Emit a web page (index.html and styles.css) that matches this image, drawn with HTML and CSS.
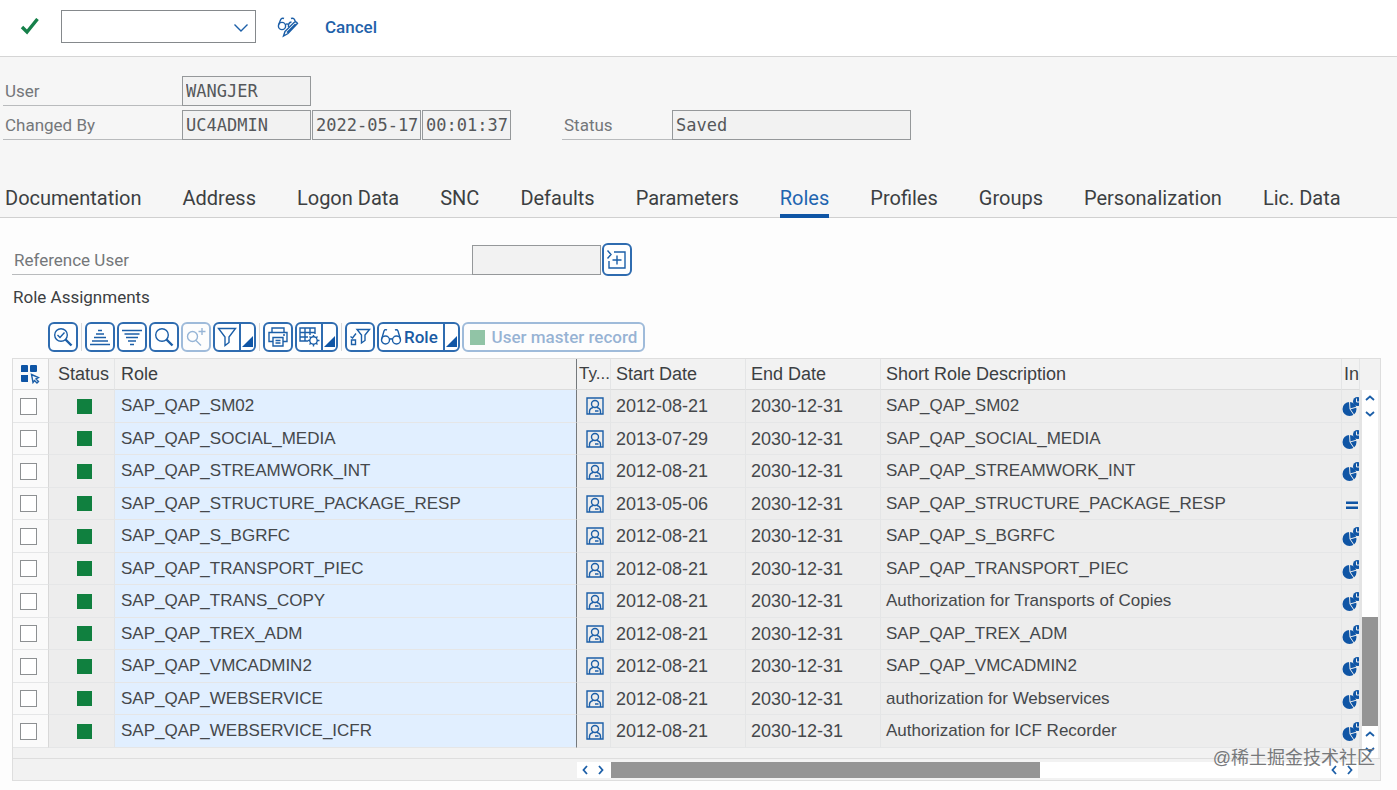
FILE: index.html
```
<!DOCTYPE html>
<html lang="en">
<head>
    <meta charset="UTF-8">
    <meta name="viewport" content="width=device-width, initial-scale=1.0">
    <title>Display User</title>
    <link rel="stylesheet" href="styles.css">
</head>
<body>
    <!-- Icon sprites -->
    <svg class="sprites" aria-hidden="true">
        <symbol id="i-user" viewBox="0 0 18 18">
            <path d="M1 1h16v16H1z M3.500 17v-2.500q0-3 3.500-4 M14.500 17v-2.500q0-3-3.500-4 M9 14h3.500" />
            <circle cx="9" cy="7" r="3.500" />
        </symbol>
        <symbol id="i-pie" viewBox="0 0 17 20">
            <circle class="fill" cx="7.500" cy="13" r="7" />
            <path class="cut" d="M7.500 5.500l.5 7.500 4 6 M8 13l7-2" />
            <circle class="fill" cx="15.500" cy="5.500" r="4.500" />
            <path class="cut" d="M14.500 2.500v3.500h2.500" />
        </symbol>
        <symbol id="i-equal" viewBox="0 0 17 20">
            <path class="fill" d="M4 7.500h12V10H4z M4 12.500h12V15H4z" />
        </symbol>
        <symbol id="i-glass" viewBox="0 0 22 22">
            <circle cx="9" cy="9" r="6.300" />
            <path class="thick" d="M13.500 13.500l6 6" />
        </symbol>
    </svg>

    <header class="topbar">
        <button class="plain check" aria-label="Enter">
            <svg width="20" height="18" viewBox="0 0 20 18"><path d="M2 9l5 5L17.500 1" /></svg>
        </button>
        <div class="command">
            <select aria-label="Command"><option></option></select>
            <svg width="16" height="10" viewBox="0 0 16 10"><path d="M1.500 1.500L8 8l6.500-6.500" /></svg>
        </div>
        <button class="plain toggle" aria-label="Display / Change">
            <svg width="22" height="22" viewBox="0 0 22 22">
                <circle cx="5" cy="10" r="3.600" />
                <path d="M1.500 9L3.500 4q1-2.500 3.500-1.500 M8.300 9q1.500-2 3-.5 M11.500 11q-.5-4.500 3-5 M14 2.500q2.500-1 3.500 1l1 2.500" />
                <path d="M8 15.500L17 6.500q2-1.500 3.500.8L11 17.500 6.500 20z M10 16.500l8.500-8.500" />
            </svg>
        </button>
        <button class="plain cancel">Cancel</button>
    </header>

    <section class="user-info">
        <div class="line">
            <label for="user" class="label">User</label>
            <input id="user" class="w-user" value="WANGJER" readonly>
        </div>
        <div class="line">
            <label for="changedBy" class="label">Changed By</label>
            <input id="changedBy" class="w-user" value="UC4ADMIN" readonly>
            <input class="w-date" value="2022-05-17" aria-label="Changed on" readonly>
            <input class="w-time" value="00:01:37" aria-label="Changed at" readonly>
            <label for="status" class="label status-label">Status</label>
            <input id="status" class="w-status" value="Saved" readonly>
        </div>
    </section>

    <nav class="tabs">
        <a href="#">Documentation</a>
        <a href="#">Address</a>
        <a href="#">Logon Data</a>
        <a href="#">SNC</a>
        <a href="#">Defaults</a>
        <a href="#">Parameters</a>
        <a href="#" class="active">Roles</a>
        <a href="#">Profiles</a>
        <a href="#">Groups</a>
        <a href="#">Personalization</a>
        <a href="#">Lic. Data</a>
    </nav>

    <main class="panel">
        <div class="line reference">
            <label for="refUser" class="label">Reference User</label>
            <input id="refUser" class="w-user" readonly>
            <button class="btn insert" aria-label="Insert reference user">
                <svg width="22" height="22" viewBox="0 0 22 22"><path d="M1.500 1.500L5 5.500 1.500 9.500 M8 3h11v16H3v-7 M11 6.500v9 M6.500 11h9" /></svg>
            </button>
        </div>

        <h2>Role Assignments</h2>

        <div class="toolbar">
            <button class="btn" aria-label="Details">
                <svg width="22" height="22" viewBox="0 0 22 22"><use href="#i-glass" /><path d="M5.500 9l2.500 2.500L12.500 6.500" /></svg>
            </button>
            <span class="sep"></span>
            <button class="btn" aria-label="Sort ascending">
                <svg width="22" height="22" viewBox="0 0 22 22"><path d="M9 4.500h4 M7 8h8 M5 11.500h12 M3 15h16 M1 18.500h20" /></svg>
            </button>
            <button class="btn" aria-label="Sort descending">
                <svg width="22" height="22" viewBox="0 0 22 22"><path d="M1 4.500h20 M3.500 8h15 M5 11.500h12 M7 15h8 M9 18.500h4" /></svg>
            </button>
            <button class="btn" aria-label="Find">
                <svg width="22" height="22" viewBox="0 0 22 22"><use href="#i-glass" /></svg>
            </button>
            <button class="btn" aria-label="Find next" disabled>
                <svg width="22" height="22" viewBox="0 0 22 22"><circle cx="7.500" cy="10.500" r="5" /><path d="M11 14.500l5 5 M17 2v7 M13.500 5.500h7" /></svg>
            </button>
            <button class="btn split" aria-label="Filter">
                <svg width="22" height="22" viewBox="0 0 22 22"><path d="M2.500 2.500h17L13 11v5.500L9 19.500V11z" /></svg>
                <span class="corner"></span>
            </button>
            <span class="sep"></span>
            <button class="btn" aria-label="Print">
                <svg width="22" height="22" viewBox="0 0 22 22"><path d="M5 6V2h12v4 M5.500 15.500H2V6.500h18v9h-3.500 M6 11.500h10V20H6z M8.500 14.500h5 M8.500 17h5 M16 9h2" /></svg>
            </button>
            <button class="btn split" aria-label="Layout">
                <svg width="22" height="22" viewBox="0 0 22 22"><path d="M10 15H2V2h15v6 M2 6.500h15 M2 11h8 M7 2v13 M12 2v7" /><circle cx="15.500" cy="14.500" r="3.700" /><path d="M15.500 9v2 M15.500 18v2.500 M10 14.500h2 M19 14.500h2.500 M11.500 10.500l1.500 1.500 M18 17l1.500 1.500 M19.500 10.500L18 12 M13 17l-1.500 1.500" /></svg>
                <span class="corner"></span>
            </button>
            <span class="sep"></span>
            <button class="btn" aria-label="Filter selection">
                <svg width="22" height="22" viewBox="0 0 22 22"><path d="M8 3.500h12.500L16 9v5.500L12.500 17V9z M2.500 14h4v4.500h-4z M1.500 10.500l2 1.500L7 7.500" /></svg>
            </button>
            <button class="btn split role">
                <svg width="22" height="22" viewBox="0 0 22 22"><circle cx="5.500" cy="14" r="4" /><circle cx="16.500" cy="14" r="4" /><path d="M9.500 13.500q1.500-1.500 3 0 M1.500 13.500L4 5q1-2 3-1 M20.500 13.500L18 5q-1-2-3-1" /></svg>
                <span class="text">Role</span>
                <span class="corner"></span>
            </button>
            <button class="btn master" disabled><span class="square"></span>User master record</button>
        </div>

        <div class="grid">
            <div class="grid-body">
                <table>
                    <colgroup>
                        <col class="c-sel"><col class="c-status"><col class="c-role"><col class="c-type">
                        <col class="c-date"><col class="c-date"><col><col class="c-in">
                    </colgroup>
                    <thead>
                        <tr>
                            <th class="sel">
                                <svg width="20" height="20" viewBox="0 0 20 20">
                                    <path class="fill" d="M2 1h5q1 0 1 1v6H1V2q0-1 1-1z M11 1h5q1 0 1 1v5q0 1-1 1h-5q-1 0-1-1V2q0-1 1-1z M1 11h7v7H2q-1 0-1-1z" />
                                    <path d="M11.500 10.500l7 3-2.500 1.500 2.500 2.500-1.500 1.500-2.500-2.500-1.500 2z" />
                                </svg>
                            </th>
                            <th class="status">Status</th>
                            <th class="divider">Role</th>
                            <th class="type">Ty...</th>
                            <th>Start Date</th>
                            <th>End Date</th>
                            <th>Short Role Description</th>
                            <th class="in">In</th>
                        </tr>
                    </thead>
                    <tbody id="roles"></tbody>
                </table>
                <div class="vscroll">
                    <div class="arrows">
                        <svg width="10" height="6" viewBox="0 0 10 6"><path d="M1 5l4-3.500L9 5" /></svg>
                        <svg width="10" height="6" viewBox="0 0 10 6"><path d="M1 1l4 3.500L9 1" /></svg>
                    </div>
                    <div class="track"><div class="thumb"></div></div>
                    <div class="arrows">
                        <svg width="10" height="6" viewBox="0 0 10 6"><path d="M1 5l4-3.500L9 5" /></svg>
                        <svg width="10" height="6" viewBox="0 0 10 6"><path d="M1 1l4 3.500L9 1" /></svg>
                    </div>
                </div>
            </div>
            <div class="hscroll">
                <div class="arrows">
                    <svg width="6" height="10" viewBox="0 0 6 10"><path d="M5 1L1.500 5 5 9" /></svg>
                    <svg width="6" height="10" viewBox="0 0 6 10"><path d="M1 1l3.500 4L1 9" /></svg>
                </div>
                <div class="track"><div class="thumb"></div></div>
                <div class="arrows">
                    <svg width="6" height="10" viewBox="0 0 6 10"><path d="M5 1L1.500 5 5 9" /></svg>
                    <svg width="6" height="10" viewBox="0 0 6 10"><path d="M1 1l3.500 4L1 9" /></svg>
                </div>
            </div>
            <div class="watermark">@稀土掘金技术社区</div>
        </div>
    </main>

    <script>
        // role, start date, description, indicator icon
        const roles = [
            ['SAP_QAP_SM02', '2012-08-21', 'SAP_QAP_SM02', 'pie'],
            ['SAP_QAP_SOCIAL_MEDIA', '2013-07-29', 'SAP_QAP_SOCIAL_MEDIA', 'pie'],
            ['SAP_QAP_STREAMWORK_INT', '2012-08-21', 'SAP_QAP_STREAMWORK_INT', 'pie'],
            ['SAP_QAP_STRUCTURE_PACKAGE_RESP', '2013-05-06', 'SAP_QAP_STRUCTURE_PACKAGE_RESP', 'equal'],
            ['SAP_QAP_S_BGRFC', '2012-08-21', 'SAP_QAP_S_BGRFC', 'pie'],
            ['SAP_QAP_TRANSPORT_PIEC', '2012-08-21', 'SAP_QAP_TRANSPORT_PIEC', 'pie'],
            ['SAP_QAP_TRANS_COPY', '2012-08-21', 'Authorization for Transports of Copies', 'pie'],
            ['SAP_QAP_TREX_ADM', '2012-08-21', 'SAP_QAP_TREX_ADM', 'pie'],
            ['SAP_QAP_VMCADMIN2', '2012-08-21', 'SAP_QAP_VMCADMIN2', 'pie'],
            ['SAP_QAP_WEBSERVICE', '2012-08-21', 'authorization for Webservices', 'pie'],
            ['SAP_QAP_WEBSERVICE_ICFR', '2012-08-21', 'Authorization for ICF Recorder', 'pie']
        ];

        document.getElementById('roles').innerHTML = roles.map(([role, start, text, icon]) => `
            <tr>
                <td class="sel"><input type="checkbox" aria-label="Select ${role}"></td>
                <td class="status"><span class="square"></span></td>
                <td class="name divider">${role}</td>
                <td class="type"><svg width="18" height="18"><use href="#i-user" /></svg></td>
                <td>${start}</td>
                <td>2030-12-31</td>
                <td class="description">${text}</td>
                <td class="in"><svg width="17" height="20"><use href="#i-${icon}" /></svg></td>
            </tr>`).join('');
    </script>
</body>
</html>
```
FILE: styles.css
```
* {
    box-sizing: border-box;
}

body {
    margin: 0;
    background-color: #fdfdfd;
    color: #3c3f42;
    font-family: Roboto, "Liberation Sans", sans-serif;
    font-size: 17px;
}

svg {
    display: block;
    flex: none;
    fill: none;
    stroke: #1c5fa8;
    stroke-width: 1.4;
}

svg .fill {
    fill: #0f55a5;
    stroke: none;
}

svg .cut {
    stroke: #ededed;
    stroke-width: 1;
}

svg .thick {
    stroke-width: 2.4;
}

.sprites {
    position: absolute;
    width: 0;
    height: 0;
}

button,
input,
select {
    margin: 0;
    font-family: inherit;
    font-size: inherit;
}

/* Top bar */
.topbar {
    display: flex;
    align-items: center;
    height: 57px;
    padding: 0 0 3px 20px;
    background-color: #fff;
    border-bottom: 1px solid #d5d5d5;
}

.plain {
    padding: 0;
    border: none;
    background: none;
    cursor: pointer;
}

.check svg {
    stroke: #16804a;
    stroke-width: 3.4;
}

.command {
    position: relative;
    margin: 0 21px;
}

.command select {
    display: block;
    width: 195px;
    height: 33px;
    border: 1px solid #85898c;
    border-radius: 0;
    background-color: #fff;
    appearance: none;
}

.command svg {
    position: absolute;
    right: 7px;
    top: 13px;
    pointer-events: none;
}

.cancel {
    margin-left: 26px;
    color: #1f62aa;
    font-weight: 500;
}

/* Form lines */
.user-info {
    display: flex;
    flex-direction: column;
    gap: 4px;
    height: 121px;
    padding: 19px 0 0 3px;
    background-color: #f6f6f6;
}

.line {
    display: flex;
    align-items: flex-end;
    gap: 1px;
}

.label {
    width: 179px;
    height: 30px;
    margin-right: -1px;
    padding-left: 2px;
    border-bottom: 1px solid #b9bbbd;
    color: #74777a;
    line-height: 30px;
}

.line input {
    height: 30px;
    padding: 0 0 0 3px;
    border: 1px solid #95989a;
    border-radius: 0;
    background-color: #f2f2f2;
    color: #55585b;
    font-family: "DejaVu Sans Mono", monospace;
    outline: none;
}

.w-user {
    width: 129px;
}

.w-date {
    width: 109px;
}

.w-time {
    width: 89px;
}

.w-status {
    width: 239px;
}

.status-label {
    width: 110px;
    margin-left: 50px;
}

/* Tabs */
.tabs {
    display: flex;
    gap: 41px;
    height: 40px;
    padding-left: 5px;
    background-color: #f6f6f6;
    border-bottom: 1px solid #d0d0d0;
    font-size: 20px;
    line-height: 40px;
}

.tabs a {
    height: 40px;
    color: #3c3f42;
    text-decoration: none;
    white-space: nowrap;
}

.tabs .active {
    color: #1f65b0;
    border-bottom: 4px solid #0f55a5;
}

/* Roles panel */
.panel {
    padding: 25px 16px 0 12px;
}

.reference .label {
    width: 460px;
}

.reference {
    align-items: center;
}

h2 {
    margin: 8px 0 12px 1px;
    font-size: 17px;
    font-weight: 400;
    line-height: 26px;
}

.btn {
    display: flex;
    align-items: center;
    justify-content: center;
    width: 30px;
    height: 30px;
    padding: 0;
    border: 2px solid #2f6cb0;
    border-radius: 6px;
    background-color: #fff;
    color: #1a5ba4;
    font-weight: 500;
    cursor: pointer;
    overflow: hidden;
}

.btn:disabled {
    opacity: 0.45;
}

.insert {
    height: 33px;
}

.toolbar {
    display: flex;
    align-items: center;
    gap: 2px;
    height: 30px;
    margin: 0 0 6px 36px;
}

.toolbar .sep {
    width: 1px;
    height: 28px;
    margin: 0 1px;
    background-color: #dadada;
}

.toolbar .split {
    justify-content: flex-start;
    width: 43px;
    padding-left: 1px;
}

.corner {
    display: flex;
    flex: none;
    align-items: flex-end;
    justify-content: flex-end;
    width: 15px;
    height: 26px;
    margin-left: auto;
    padding: 0 1px 3px 0;
    border-left: 2px solid #2f6cb0;
}

.corner::after {
    content: "";
    width: 11px;
    height: 11px;
    background-color: #0f55a5;
    clip-path: polygon(100% 0, 100% 100%, 0 100%);
}

.toolbar .role {
    width: 83px;
}

.role .text {
    margin-left: 2px;
}

.toolbar .master {
    width: 183px;
    gap: 7px;
}

.square {
    display: block;
    width: 15px;
    height: 15px;
    background-color: #10803f;
}

/* Table of roles */
.grid {
    position: relative;
    border: 1px solid #dedede;
    background-color: #f2f2f2;
    font-family: "Liberation Sans", Arial, sans-serif;
    font-size: 18px;
}

.grid-body {
    display: flex;
    border-bottom: 1px solid #dedede;
}

table {
    flex: 1;
    width: 100%;
    margin-bottom: 10px;
    table-layout: fixed;
    border-collapse: separate;
    border-spacing: 0;
}

.c-sel {
    width: 36px;
}

.c-status {
    width: 66px;
}

.c-role {
    width: 462px;
}

.c-type {
    width: 34px;
}

.c-date {
    width: 135px;
}

.c-in {
    width: 18px;
}

th,
td {
    height: 33px;
    padding: 0 0 0 5px;
    border-right: 1px solid #e4e5e6;
    border-bottom: 1px solid #e5e6e7;
    background-color: #ededed;
    font-weight: 400;
    line-height: 24px;
    text-align: left;
    white-space: nowrap;
}

td {
    color: #45484b;
}

tbody tr:nth-child(even) td {
    height: 32px;
}

th {
    height: 31px;
    border-bottom-color: #dcdcdc;
    background-color: #f2f2f2;
}

th.sel,
td.sel {
    padding-left: 7px;
    border-right-color: #d8d8d8;
    background-color: #fafafa;
}

.sel input {
    display: block;
    width: 17px;
    height: 17px;
    margin: 0;
    border: 1px solid #8d9092;
    background-color: #fff;
    appearance: none;
}

th.status {
    padding-left: 9px;
}

td.status {
    padding-left: 28px;
}

td.name {
    background-color: #e1efff;
}

td.name,
td.description {
    font-size: 17px;
}

th.divider,
td.divider {
    padding-left: 6px;
    border-right-color: #75797c;
}

th.type {
    padding-left: 2px;
    font-size: 17px;
}

td.type {
    padding-left: 9px;
}

th.in {
    padding-left: 2px;
}

td.in {
    padding-left: 0;
}

/* Scroll bars */
.vscroll {
    display: flex;
    flex-direction: column;
    width: 20px;
    margin-top: 31px;
    border-right: 2px solid #efefef;
    border-left: 2px solid #e4e4e4;
    background-color: #fff;
}

.arrows {
    display: flex;
    flex: none;
}

.arrows svg {
    stroke-width: 1.8;
}

.vscroll .arrows {
    flex-direction: column;
    align-items: center;
    justify-content: space-around;
    height: 32px;
}

.track {
    display: flex;
    flex: 1;
}

.vscroll .track {
    flex-direction: column;
    justify-content: flex-end;
}

.thumb {
    background-color: #949494;
}

.vscroll .thumb {
    height: 36%;
}

.hscroll {
    display: flex;
    height: 21px;
    padding: 3px 22px 2px 564px;
}

.hscroll .arrows {
    align-items: center;
    justify-content: space-around;
    width: 32px;
    background-color: #fff;
}

.hscroll .track {
    padding-left: 2px;
    background-color: #fff;
}

.hscroll .thumb {
    width: 60%;
}

.watermark {
    position: absolute;
    right: 5px;
    bottom: 9px;
    color: #77797b;
    font-family: "Liberation Sans", "Noto Sans CJK SC", sans-serif;
    line-height: 26px;
    pointer-events: none;
}
```
